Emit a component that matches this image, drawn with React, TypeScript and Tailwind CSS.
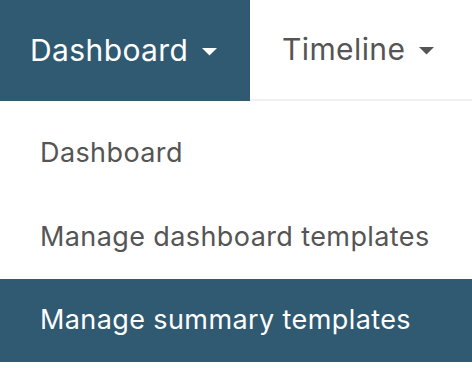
import React from "react";

function Caret({ color }: { color: string }) {
  return (
    <svg width="15" height="8" viewBox="0 0 15 8" className="ml-[14px] mt-[2px]">
      <path d="M0 0 L15 0 L7.5 7.5 Z" fill={color} />
    </svg>
  );
}

export default function App() {
  return (
    <div className="w-[472px] h-[368px] bg-white overflow-hidden" style={{ fontFamily: "Inter, 'Noto Sans', sans-serif" }}>
      <div className="flex h-[101px]">
        <div className="w-[250px] h-full bg-[#2f5a72] flex items-center pl-[30px] text-white text-[30px] tracking-[0.4px]">
          <span>Dashboard</span>
          <Caret color="#ffffff" />
        </div>
        <div className="flex-1 h-full flex items-center pl-[32px] text-[#555555] text-[30px] tracking-[0.4px] border-b-2 border-[#f0f0f0]">
          <span>Timeline</span>
          <Caret color="#555555" />
        </div>
      </div>
      <div className="pt-[10px] flex flex-col text-[27px] tracking-[0.4px]">
        <div className="h-[84px] flex items-center pl-[40px] text-[#555555]">Dashboard</div>
        <div className="h-[84px] flex items-center pl-[40px] text-[#555555]">Manage dashboard templates</div>
        <div className="h-[83px] flex items-center pl-[40px] text-white bg-[#2f5a72]">Manage summary templates</div>
      </div>
    </div>
  );
}
